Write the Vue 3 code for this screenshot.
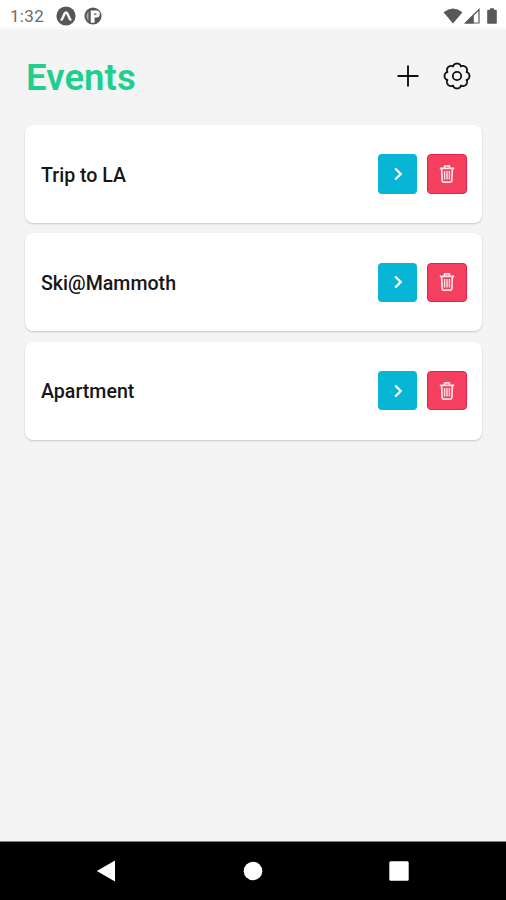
<script setup>
import { ref } from 'vue'

const events = ref([
  { id: 1, name: 'Trip to LA' },
  { id: 2, name: 'Ski@Mammoth' },
  { id: 3, name: 'Apartment' }
])

function remove(id) {
  events.value = events.value.filter((event) => event.id !== id)
}

// Eight rounded lobes with notches between them, centred in a 28x28 box
function gearOutline() {
  const points = []
  for (let i = 0; i < 144; i++) {
    const a = (i / 144) * Math.PI * 2
    const r = 10.3 + 2.2 * Math.pow(Math.abs(Math.cos(4 * a)), 0.7)
    points.push(`${(14 + r * Math.cos(a)).toFixed(2)} ${(14 + r * Math.sin(a)).toFixed(2)}`)
  }
  return `M${points.join('L')}Z`
}
const gearPath = gearOutline()
</script>

<template>
  <div class="screen">
    <header class="status">
      <div class="status-left">
        <span class="clock">1:32</span>
        <svg class="badge" viewBox="0 0 20 20">
          <circle cx="10" cy="10" r="9.600" fill="#565656" />
          <path d="M5.600 13.600C7.600 11.600 8 6.500 10 6.500s2.400 5.100 4.400 7.100" fill="none" stroke="#f4f4f4" stroke-width="2.600" stroke-linecap="round" />
        </svg>
        <svg class="badge second" viewBox="0 0 20 20">
          <circle cx="10" cy="10" r="9.500" fill="#565656" />
          <path d="M7.500 4h6.200a3.900 3.900 0 0 1 0 7.800H11.800V17.500H7.500Z" fill="#fff" />
          <path d="M11 7h2.800v2H11Z" fill="#888" />
          <path d="M5 4.600v10.800A7.400 7.400 0 0 1 5 4.600Z" fill="#aaa" />
        </svg>
      </div>
      <div class="status-right">
        <svg width="20" height="16" viewBox="0 0 20 16"><path d="M.5 4.200Q10-3 19.500 4.200L10 15.600Z" fill="#585858" /></svg>
        <svg width="16" height="16" viewBox="0 0 16 16">
          <path d="M1.500 15 15 1.500V15Z" fill="#fff" stroke="#585858" stroke-width="1.200" />
          <path d="M.5 15.600 9.800 6.200v9.400Z" fill="#585858" />
        </svg>
        <svg class="battery" width="10" height="16" viewBox="0 0 10 16"><path d="M3 .3h4v1.500h2q.8 0 .8.8v12.300q0 .8-.8.8H1q-.8 0-.8-.8V2.600q0-.8.8-.8h2Z" fill="#585858" /></svg>
      </div>
    </header>

    <main class="content">
      <div class="heading">
        <h1>Events</h1>
        <div class="tools">
          <button class="tool" aria-label="Add event">
            <svg width="24" height="24" viewBox="0 0 24 24"><path d="M12 1.500v21M1.500 12h21" stroke="#111" stroke-width="1.900" /></svg>
          </button>
          <button class="tool" aria-label="Settings">
            <svg width="28" height="28" viewBox="0 0 28 28" fill="none" stroke="#111" stroke-width="1.800" stroke-linejoin="round">
              <path :d="gearPath" />
              <circle cx="14" cy="14" r="4.200" />
            </svg>
          </button>
        </div>
      </div>

      <ul class="list">
        <li v-for="event in events" :key="event.id" class="card">
          <span class="name">{{ event.name }}</span>
          <div class="actions">
            <button class="action open" aria-label="Open">
              <svg width="20" height="20" viewBox="0 0 20 20"><path d="M7.200 4.500 12.700 10l-5.500 5.500" fill="none" stroke="#fff" stroke-width="2.300" /></svg>
            </button>
            <button class="action delete" aria-label="Delete" @click="remove(event.id)">
              <svg width="20" height="20" viewBox="0 0 20 20" fill="none" stroke="#ffe3e8" stroke-width="1.700">
                <path d="M2.800 4.400h14.400M7.500 4V2.300q0-.5.5-.5h4q.5 0 .5.500V4M4.600 4.400l.6 12.500q.1 1.300 1.300 1.300h7q1.200 0 1.300-1.300l.6-12.500" />
                <path d="M7.600 7v8.600M10 7v8.600M12.400 7v8.600" stroke-width="1.400" />
              </svg>
            </button>
          </div>
        </li>
      </ul>
    </main>

    <nav class="navbar">
      <svg width="20" height="22" viewBox="0 0 20 22"><path d="M.8 11 19 .5v21Z" fill="#fff" /></svg>
      <svg width="20" height="20" viewBox="0 0 20 20"><circle cx="10" cy="10" r="9.300" fill="#fff" /></svg>
      <svg width="20" height="20" viewBox="0 0 20 20"><rect x=".3" y=".3" width="19.400" height="19.400" rx="1.500" fill="#fff" /></svg>
    </nav>
  </div>
</template>

<style>
body {
  margin: 0;
}
</style>

<style scoped>
.screen {
  width: 506px;
  height: 900px;
  display: flex;
  flex-direction: column;
  overflow: hidden;
  background: #f4f4f4;
  font-family: Roboto, sans-serif;
}
svg {
  display: block;
  flex: none;
}
button {
  border: 0;
  padding: 0;
  background: none;
}
.status {
  box-sizing: border-box;
  height: 30px;
  flex: none;
  display: flex;
  justify-content: space-between;
  padding: 0 8px 0 10px;
  background: linear-gradient(#fff 27px, #f4f4f4 30px);
}
.status-left,
.status-right {
  display: flex;
  align-items: center;
  height: 31px;
}
.clock {
  width: 46px;
  font-size: 17px;
  letter-spacing: 0.3px;
  color: #6c6c6c;
}
.badge {
  width: 20px;
  height: 20px;
}
.badge.second {
  width: 18px;
  height: 18px;
  margin-left: 8px;
}
.status-right {
  gap: 1px;
}
.battery {
  margin-left: 6px;
  margin-right: 1px;
}
.content {
  flex: 1;
  padding: 0 24px 0 25px;
}
.heading {
  display: flex;
  justify-content: space-between;
  align-items: center;
  height: 95px;
}
h1 {
  margin: 0 0 0 1px;
  font-size: 36.500px;
  line-height: 42px;
  font-weight: 600;
  letter-spacing: 0.1px;
  color: #1fcf90;
}
.tools {
  display: flex;
  align-items: center;
  gap: 23.500px;
  margin: 0 11px 3px 0;
}
.list {
  list-style: none;
  margin: 0;
  padding: 0;
  display: flex;
  flex-direction: column;
  gap: 10.300px;
}
.card {
  box-sizing: border-box;
  height: 98px;
  display: flex;
  align-items: center;
  justify-content: space-between;
  padding: 0 15.500px 0 16px;
  background: #fff;
  border-radius: 8px;
  box-shadow: 0 1px 2px rgba(0, 0, 0, 0.19);
}
.name {
  font-size: 19.600px;
  line-height: 24px;
  font-weight: 500;
  color: #161616;
  padding-top: 3px;
}
.actions {
  display: flex;
  gap: 10px;
}
.action {
  box-sizing: border-box;
  width: 39.300px;
  height: 39.300px;
  border-radius: 4px;
  display: flex;
  align-items: center;
  justify-content: center;
}
.open {
  background: #06b6d4;
}
.delete {
  background: #f43f5e;
  border: 1px solid #e91f4b;
}
.navbar {
  box-sizing: border-box;
  height: 59px;
  flex: none;
  display: flex;
  align-items: center;
  justify-content: space-between;
  padding: 0 97px 1px 96px;
  background: #000;
  border-top: 1px solid #808080;
}
</style>
